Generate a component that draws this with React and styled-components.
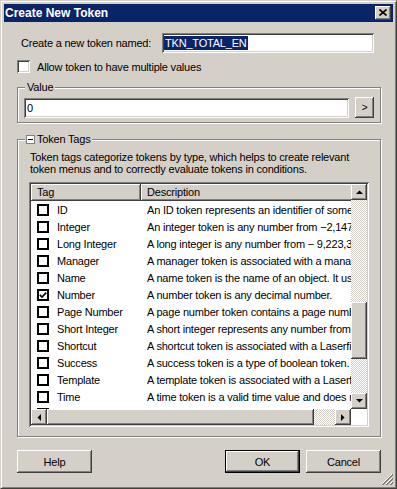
import React from "react";
import styled, { createGlobalStyle, css } from "styled-components";

const FACE = "#d4d0c8";
const SHADOW = "#808080";
const DARK = "#404040";
const NAVY = "#0a246a";

const GlobalStyle = createGlobalStyle`
  html, body { margin: 0; padding: 0; background: ${FACE}; }
  body {
    font-family: "Liberation Sans", Arial, sans-serif;
    font-size: 11px;
    letter-spacing: -0.2px;
    color: #000;
  }
  * { box-sizing: border-box; }
`;

const raised = css`
  background: ${FACE};
  box-shadow: inset -1px -1px 0 ${DARK}, inset 1px 1px 0 #fff,
    inset -2px -2px 0 ${SHADOW}, inset 2px 2px 0 ${FACE};
`;

const sunken = css`
  box-shadow: inset 1px 1px 0 ${SHADOW}, inset -1px -1px 0 #fff,
    inset 2px 2px 0 ${DARK}, inset -2px -2px 0 ${FACE};
`;

const checker = css`
  background-color: #fff;
  background-image: repeating-conic-gradient(${FACE} 0% 25%, #fff 0% 50%);
  background-size: 2px 2px;
`;

const Window = styled.div`
  position: relative;
  width: 397px;
  height: 489px;
  background: ${FACE};
  border: 1px solid;
  border-color: ${FACE} ${DARK} ${DARK} ${FACE};
  box-shadow: inset 1px 1px 0 #fff, inset -1px -1px 0 ${SHADOW};
  padding: 3px;
  display: flex;
  flex-direction: column;
`;

const TitleBar = styled.div`
  height: 18px;
  background: ${NAVY};
  display: flex;
  align-items: center;
  justify-content: space-between;
  padding: 0 2px 0 1px;
`;

const Title = styled.span`
  color: #fff;
  font-weight: bold;
  font-size: 12px;
  letter-spacing: 0;
  line-height: 18px;
`;

const CloseButton = styled.div`
  ${raised};
  width: 16px;
  height: 14px;
  display: flex;
  align-items: center;
  justify-content: center;
  padding-bottom: 1px;
`;

const Body = styled.div`
  flex: 1;
  display: flex;
  flex-direction: column;
  padding: 0 12px 0 13px;
`;

const NameRow = styled.div`
  margin-top: 11px;
  height: 20px;
  display: flex;
  align-items: center;
  padding: 0 7px 0 4px;
`;

const Field = styled.div`
  ${sunken};
  background: #fff;
  width: ${(p) => p.$w}px;
  height: 20px;
  margin-left: ${(p) => (p.$auto ? "auto" : "0")};
  display: flex;
  align-items: center;
  padding: 0 2px 0 ${(p) => p.$pl ?? 3}px;
  white-space: nowrap;
  overflow: hidden;
`;

const Selected = styled.span`
  background: ${NAVY};
  color: #fff;
  line-height: 14px;
  padding: 0 1px;
`;

const CheckRow = styled.label`
  margin-top: 7px;
  height: 13px;
  display: flex;
  align-items: center;
  gap: 7px;
`;

const ClassicCheck = styled.span`
  ${sunken};
  background: #fff;
  width: 13px;
  height: 13px;
  flex: none;
`;

const Group = styled.fieldset`
  margin: ${(p) => p.$mt}px 0 0 0;
  padding: 0;
  min-width: 0;
  border: 1px solid ${SHADOW};
  box-shadow: inset 1px 1px 0 #fff, 1px 1px 0 #fff;
`;

const Legend = styled.legend`
  margin-left: 7px;
  padding: 0 2px 0 ${(p) => p.$pl ?? 2}px;
  line-height: 13px;
  background: ${FACE};
  display: flex;
  align-items: center;
`;

const Collapse = styled.span`
  width: 9px;
  height: 9px;
  border: 1px solid ${SHADOW};
  background: #fff;
  display: inline-flex;
  align-items: center;
  justify-content: center;
  margin-right: 2px;
  &::after {
    content: "";
    width: 5px;
    height: 1px;
    background: #000;
  }
`;

const ValueRow = styled.div`
  display: flex;
  align-items: flex-start;
  gap: 6px;
  padding: 4px 6px 4px 6px;
`;

const SmallButton = styled.div`
  ${raised};
  width: 19px;
  height: 21px;
  margin-top: -1px;
  display: flex;
  align-items: center;
  justify-content: center;
  font-size: 10px;
`;

const TagsBody = styled.div`
  padding: 5px 11px 9px 11px;
`;

const Intro = styled.p`
  margin: 0 0 7px 1px;
  line-height: 12px;
  white-space: nowrap;
`;

const ListView = styled.div`
  ${sunken};
  background: #fff;
  width: 340px;
  height: 245px;
  padding: 2px;
  display: grid;
  grid-template-columns: 1fr 16px;
  grid-template-rows: 1fr 16px;
`;

const ListContent = styled.div`
  overflow: hidden;
  min-width: 0;
`;

const HeaderRow = styled.div`
  display: grid;
  grid-template-columns: 110px 400px;
  height: 17px;
`;

const HeaderCell = styled.div`
  ${raised};
  padding-left: 6px;
  line-height: 17px;
`;

const Row = styled.div`
  display: grid;
  grid-template-columns: 110px 400px;
  height: 17px;
  align-items: center;
  white-space: nowrap;
`;

const TagCell = styled.div`
  display: flex;
  align-items: center;
  gap: 8px;
  padding-left: 6px;
  overflow: hidden;
`;

const DescCell = styled.div`
  padding-left: 6px;
  overflow: hidden;
`;

const ListCheck = styled.span`
  width: 12px;
  height: 12px;
  border: 2px solid #000;
  background: #fff;
  flex: none;
  display: flex;
  align-items: center;
  justify-content: center;
`;

const VScroll = styled.div`
  display: flex;
  flex-direction: column;
`;

const HScroll = styled.div`
  display: flex;
`;

const ArrowButton = styled.div`
  ${raised};
  width: 16px;
  height: 16px;
  flex: none;
  display: flex;
  align-items: center;
  justify-content: center;
`;

const Track = styled.div`
  ${checker};
  flex: ${(p) => (p.$size ? `0 0 ${p.$size}px` : "1")};
`;

const Thumb = styled.div`
  ${raised};
  flex: 0 0 ${(p) => p.$size}px;
`;

const Corner = styled.div`
  background: #fff;
`;

const Footer = styled.div`
  margin-top: 13px;
  display: flex;
  gap: 6px;
`;

const PushButton = styled.div`
  ${raised};
  width: 75px;
  height: 23px;
  display: flex;
  align-items: center;
  justify-content: center;
  margin-right: ${(p) => (p.$push ? "auto" : "0")};
  ${(p) =>
    p.$default &&
    css`
      border: 1px solid #000;
    `}
`;

const Grip = styled.svg`
  position: absolute;
  right: 3px;
  bottom: 3px;
`;

const Arrow = ({ dir }) => {
  const pts = {
    up: "0,4 7,4 3.5,0.5",
    down: "0,0 7,0 3.5,3.5",
    left: "4,0 4,7 0.5,3.5",
    right: "0,0 0,7 3.5,3.5",
  }[dir];
  const horiz = dir === "left" || dir === "right";
  return (
    <svg width={horiz ? 4 : 7} height={horiz ? 7 : 4} viewBox={horiz ? "0 0 4 7" : "0 0 7 4"}>
      <polygon points={pts} fill="#000" />
    </svg>
  );
};

const rows = [
  ["ID", "An ID token represents an identifier of some object."],
  ["Integer", "An integer token is any number from \u22122,147,483,648 to 2,147,483,647."],
  ["Long Integer", "A long integer is any number from \u2212 9,223,372,036,854,775,808."],
  ["Manager", "A manager token is associated with a manager."],
  ["Name", "A name token is the name of an object. It uses text."],
  ["Number", "A number token is any decimal number.", true],
  ["Page Number", "A page number token contains a page number."],
  ["Short Integer", "A short integer represents any number from \u221232,768."],
  ["Shortcut", "A shortcut token is associated with a Laserfiche shortcut."],
  ["Success", "A success token is a type of boolean token."],
  ["Template", "A template token is associated with a Laserfiche template."],
  ["Time", "A time token is a valid time value and does not include a date."],
  ["Yes/No", "A yes/no token is a boolean value."],
];

export default function App() {
  return (
    <>
      <GlobalStyle />
      <Window>
        <TitleBar>
          <Title>Create New Token</Title>
          <CloseButton>
            <svg width="8" height="7" viewBox="0 0 8 7">
              <path d="M0.5 0.5 L7.5 6.5 M7.5 0.5 L0.5 6.5" stroke="#000" strokeWidth="1.6" />
            </svg>
          </CloseButton>
        </TitleBar>
        <Body>
          <NameRow>
            <span>Create a new token named:</span>
            <Field $w={212} $auto $pl={2}>
              <Selected>TKN_TOTAL_EN</Selected>
            </Field>
          </NameRow>
          <CheckRow>
            <ClassicCheck />
            <span>Allow token to have multiple values</span>
          </CheckRow>
          <Group $mt={8}>
            <Legend>Value</Legend>
            <ValueRow>
              <Field $w={325}>0</Field>
              <SmallButton>&gt;</SmallButton>
            </ValueRow>
          </Group>
          <Group $mt={10}>
            <Legend $pl={1}>
              <Collapse />
              Token Tags
            </Legend>
            <TagsBody>
              <Intro>
                Token tags categorize tokens by type, which helps to create relevant
                <br />
                token menus and to correctly evaluate tokens in conditions.
              </Intro>
              <ListView>
                <ListContent>
                  <HeaderRow>
                    <HeaderCell>Tag</HeaderCell>
                    <HeaderCell>Description</HeaderCell>
                  </HeaderRow>
                  {rows.map(([tag, desc, checked]) => (
                    <Row key={tag}>
                      <TagCell>
                        <ListCheck>
                          {checked && (
                            <svg width="8" height="8" viewBox="0 0 8 8">
                              <path d="M0.8 3.8 L3 6 L7.2 1.6" stroke="#000" strokeWidth="1.7" fill="none" />
                            </svg>
                          )}
                        </ListCheck>
                        <span>{tag}</span>
                      </TagCell>
                      <DescCell>{desc}</DescCell>
                    </Row>
                  ))}
                </ListContent>
                <VScroll>
                  <ArrowButton>
                    <Arrow dir="up" />
                  </ArrowButton>
                  <Track $size={102} />
                  <Thumb $size={57} />
                  <Track />
                  <ArrowButton>
                    <Arrow dir="down" />
                  </ArrowButton>
                </VScroll>
                <HScroll>
                  <ArrowButton>
                    <Arrow dir="left" />
                  </ArrowButton>
                  <Thumb $size={267} />
                  <Track />
                  <ArrowButton>
                    <Arrow dir="right" />
                  </ArrowButton>
                </HScroll>
                <Corner />
              </ListView>
            </TagsBody>
          </Group>
          <Footer>
            <PushButton $push>Help</PushButton>
            <PushButton $default>OK</PushButton>
            <PushButton>Cancel</PushButton>
          </Footer>
        </Body>
        <Grip width="12" height="12" viewBox="0 0 12 12">
          <path d="M11 1 L1 11 M11 5 L5 11 M11 9 L9 11" stroke="#fff" strokeWidth="1" />
          <path d="M12 1 L1 12 M12 2 L2 12 M12 5 L5 12 M12 6 L6 12 M12 9 L9 12 M12 10 L10 12" stroke={SHADOW} strokeWidth="1" />
        </Grip>
      </Window>
    </>
  );
}
